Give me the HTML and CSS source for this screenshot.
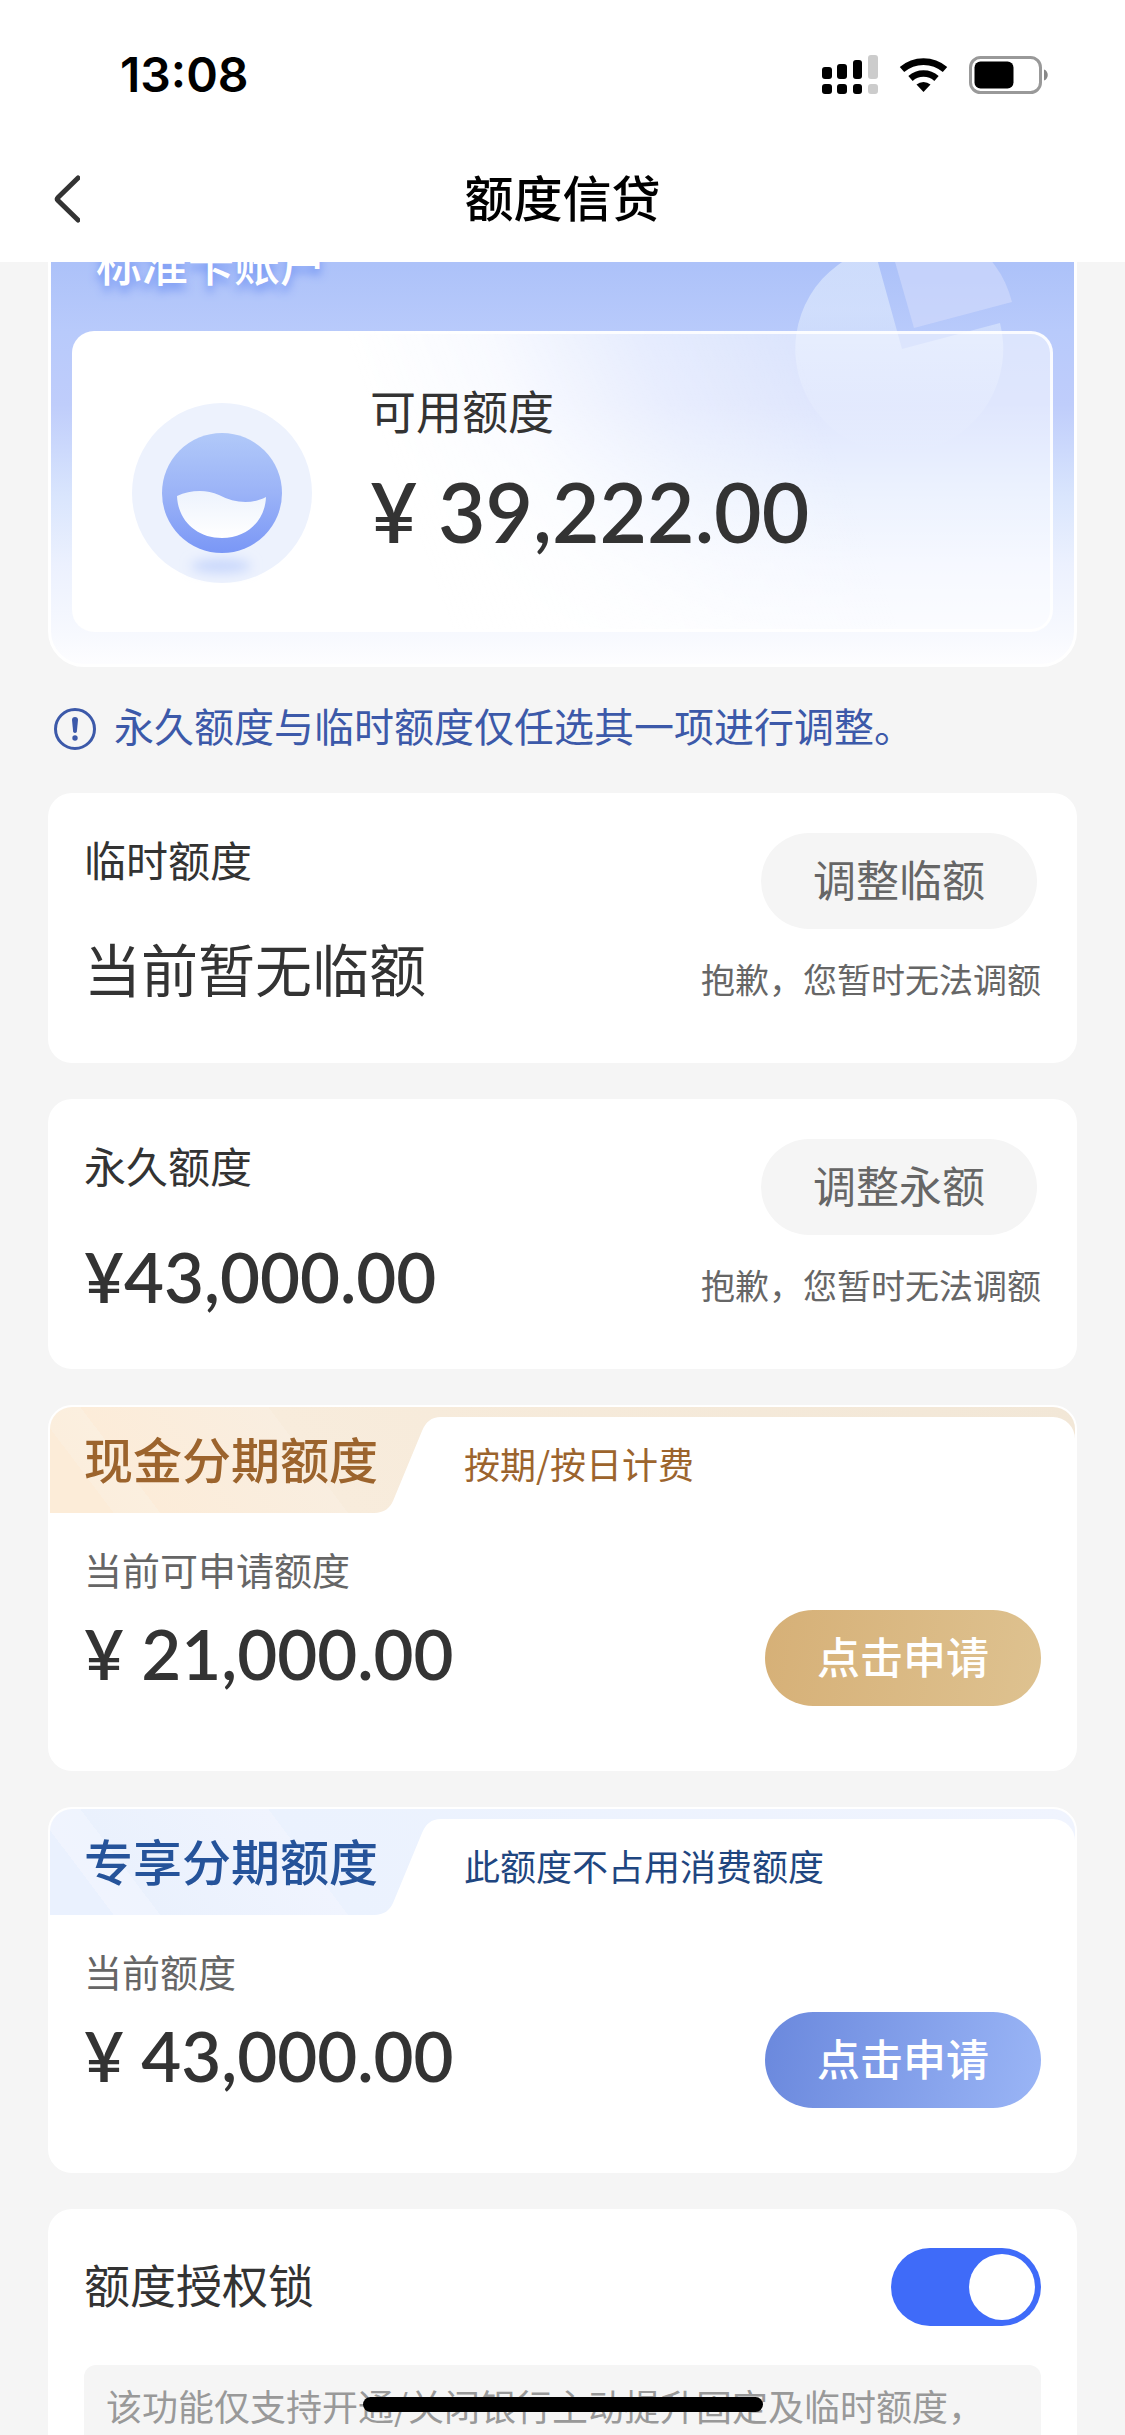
FILE: index.html
```html
<!DOCTYPE html>
<html lang="zh-CN">
<head>
<meta charset="utf-8">
<meta name="viewport" content="width=device-width, initial-scale=1">
<title>额度信贷</title>
<link rel="stylesheet" href="styles.css">
</head>
<body>
<div class="app">
  <header class="top">
    <div class="status">
      <span class="time">13:08</span>
      <svg class="status-icons" width="227" height="40" viewBox="0 0 227 40" aria-hidden="true">
        <rect x="0" y="12" width="10" height="12" rx="3"/>
        <rect x="15" y="9" width="10" height="15" rx="3"/>
        <rect x="31" y="5" width="9" height="19" rx="3"/>
        <rect x="46" y="0" width="10" height="24" rx="3" fill="#ccc"/>
        <rect x="0" y="29" width="10" height="10" rx="3"/>
        <rect x="15" y="29" width="10" height="10" rx="3"/>
        <rect x="31" y="29" width="9" height="10" rx="3"/>
        <rect x="46" y="29" width="10" height="10" rx="3" fill="#ccc"/>
        <path d="M80 14.500A33 33 0 0 1 123 14.500" fill="none" stroke="#000" stroke-width="6.800"/>
        <path d="M88.500 23.500A19.500 19.500 0 0 1 114.500 23.500" fill="none" stroke="#000" stroke-width="6.500"/>
        <path d="M94.500 29.500A11 11 0 0 1 108.500 29.500L101.500 37Z"/>
        <rect x="148.500" y="2.500" width="70" height="35" rx="10" fill="none" stroke="#999" stroke-width="3"/>
        <rect x="152.500" y="6.500" width="39" height="27" rx="6"/>
        <path d="M222 14.500C227 16 227 24 222 25.500Z" fill="#888"/>
      </svg>
    </div>
    <nav class="nav">
      <button class="back" type="button" aria-label="返回">
        <svg width="28" height="48" viewBox="0 0 28 48" aria-hidden="true"><path d="M26 3L6 22.500Q4.500 24 6 25.500L26 45" fill="none" stroke="#333" stroke-width="5" stroke-linecap="round"/></svg>
      </button>
      <h1 class="nav-title">额度信贷</h1>
    </nav>
  </header>

  <main class="content">
    <section class="hero">
      <svg class="hero-pie" width="230" height="220" viewBox="0 0 230 220" aria-hidden="true">
        <defs>
          <linearGradient id="pie" x1="0" y1="0" x2="0" y2="1">
            <stop offset="0.300" stop-color="#dfeafd" stop-opacity=".65"/>
            <stop offset="1" stop-color="#dfeafd" stop-opacity="0"/>
          </linearGradient>
        </defs>
        <path d="M108 117L80 16A104 104 0 1 0 206 91Z" fill="url(#pie)"/>
        <path d="M120 96L91 -5A103 103 0 0 1 218 70Z" fill="#d4dcfb" fill-opacity=".6"/>
      </svg>
      <h2 class="hero-title">标准卡账户</h2>
      <div class="hero-panel">
        <svg class="hero-icon" width="180" height="180" viewBox="0 0 180 180" aria-hidden="true">
          <defs>
            <linearGradient id="ball" x1="0" y1="0" x2="0" y2="1">
              <stop offset="0" stop-color="#b1c9f9"/>
              <stop offset="0.500" stop-color="#9bb3f7"/>
              <stop offset="1" stop-color="#7a97f6"/>
            </linearGradient>
            <linearGradient id="wave" x1="0" y1="0" x2="0" y2="1">
              <stop offset="0" stop-color="#edf3fd"/>
              <stop offset="1" stop-color="#fff"/>
            </linearGradient>
            <filter id="soft" x="-50%" y="-100%" width="200%" height="300%"><feGaussianBlur stdDeviation="6"/></filter>
          </defs>
          <circle cx="90" cy="90" r="90" fill="#edf2fd"/>
          <ellipse cx="89" cy="163" rx="30" ry="7" fill="#c8d7fc" filter="url(#soft)"/>
          <circle cx="90" cy="90" r="60" fill="url(#ball)"/>
          <path d="M45 93C58 87 74 86 87 92C102 100 119 102 134 94C133 118 115 135 90 135C65 135 46 118 45 93Z" fill="url(#wave)"/>
        </svg>
        <div class="hero-text">
          <p class="hero-label">可用额度</p>
          <p class="hero-amount">¥ 39,222.00</p>
        </div>
      </div>
    </section>

    <p class="notice">
      <svg class="notice-icon" width="42" height="42" viewBox="0 0 42 42" aria-hidden="true">
        <circle cx="21" cy="21" r="19.500" fill="none" stroke="#3c59a9" stroke-width="3"/>
        <path d="M18 12Q18 9 21 9Q24 9 24 12L22.800 24Q21 26 19.200 24Z" fill="#3c59a9"/>
        <circle cx="21" cy="30" r="2.700" fill="#3c59a9"/>
      </svg>
      <span>永久额度与临时额度仅任选其一项进行调整。</span>
    </p>

    <div class="cards">
      <section class="card limit">
        <div class="limit-info">
          <h2 class="limit-name">临时额度</h2>
          <p class="limit-value">当前暂无临额</p>
        </div>
        <div class="limit-side">
          <button class="pill pill-muted" type="button">调整临额</button>
          <p class="limit-note">抱歉，您暂时无法调额</p>
        </div>
      </section>

      <section class="card limit">
        <div class="limit-info">
          <h2 class="limit-name">永久额度</h2>
          <p class="amount">¥43,000.00</p>
        </div>
        <div class="limit-side">
          <button class="pill pill-muted" type="button">调整永额</button>
          <p class="limit-note">抱歉，您暂时无法调额</p>
        </div>
      </section>

      <section class="card plan plan-gold">
        <div class="plan-head">
          <h2 class="plan-tab">现金分期额度</h2>
          <svg class="plan-edge" width="68" height="96" viewBox="0 0 68 96" aria-hidden="true"><path d="M0 96C10 96 16 91 19 84L48 14C52 5 57 0 67 0H68V96Z" fill="#fff"/></svg>
          <p class="plan-sub">按期/按日计费</p>
        </div>
        <div class="plan-body">
          <p class="plan-label">当前可申请额度</p>
          <div class="plan-row">
            <p class="amount">¥ 21,000.00</p>
            <button class="pill pill-gold" type="button">点击申请</button>
          </div>
        </div>
      </section>

      <section class="card plan plan-blue">
        <div class="plan-head">
          <h2 class="plan-tab">专享分期额度</h2>
          <svg class="plan-edge" width="68" height="96" viewBox="0 0 68 96" aria-hidden="true"><path d="M0 96C10 96 16 91 19 84L48 14C52 5 57 0 67 0H68V96Z" fill="#fff"/></svg>
          <p class="plan-sub">此额度不占用消费额度</p>
        </div>
        <div class="plan-body">
          <p class="plan-label">当前额度</p>
          <div class="plan-row">
            <p class="amount">¥ 43,000.00</p>
            <button class="pill pill-blue" type="button">点击申请</button>
          </div>
        </div>
      </section>

      <section class="card lock">
        <div class="lock-row">
          <label class="lock-name" for="lock">额度授权锁</label>
          <input class="switch" id="lock" type="checkbox" role="switch" checked>
        </div>
        <p class="lock-note">该功能仅支持开通/关闭银行主动提升固定及临时额度，</p>
      </section>
    </div>
  </main>
  <div class="home-bar"></div>
</div>
</body>
</html>
```
FILE: styles.css
```css
* {
  box-sizing: border-box;
}

body {
  margin: 0;
  background: #f5f5f5;
  color: #333;
  font-family: "Noto Sans CJK SC", sans-serif;
}

h1, h2, p {
  margin: 0;
  font-weight: 400;
}

button {
  border: 0;
  padding: 0;
  background: none;
  font-family: inherit;
}

svg {
  display: block;
  flex: none;
}

.app {
  display: flex;
  flex-direction: column;
  height: 100vh;
}

/* Status bar and navigation */
.top {
  flex: none;
  background: #fff;
}

.status {
  display: flex;
  align-items: center;
  justify-content: space-between;
  height: 130px;
  padding: 20px 76px 0 120px;
}

.time {
  color: #000;
  font: 600 48px/60px Inter, sans-serif;
}

.nav {
  display: grid;
  grid-template-columns: 80px 1fr 80px;
  align-items: center;
  height: 132px;
}

.back {
  justify-self: end;
  padding-top: 6px;
}

.nav-title {
  color: #000;
  font-size: 49px;
  font-weight: 500;
  line-height: 72px;
  text-align: center;
}

/* Scrolling content */
.content {
  flex: 1;
  min-height: 0;
  padding: 0 48px;
  overflow-y: auto;
  scrollbar-width: none;
}

/* Account card, scrolled partly under the navigation */
.hero {
  position: relative;
  margin-top: -60px;
  padding: 24px 21px 32px;
  border: 3px solid #fff;
  border-radius: 36px;
  background: linear-gradient(#adc2f9 60px, #b8cafb 126px, #bfcdfb 200px, #d9e5fd 290px, #ecf1fe 360px, #f7f9fe 430px, #fdfdff 100%);
}

.hero-pie {
  position: absolute;
  top: 27px;
  right: 50px;
}

.hero-title {
  margin-bottom: 38px;
  padding-left: 24px;
  color: #fff;
  font-size: 46px;
  font-weight: 500;
  line-height: 64px;
  text-shadow: 0 6px 10px #6c8ff2;
}

.hero-panel {
  position: relative;
  display: flex;
  align-items: flex-start;
  gap: 58px;
  padding: 45px 57px 46px;
  border: 3px solid rgba(255, 255, 255, .85);
  border-radius: 22px;
  background: linear-gradient(70deg, #fff 35%, rgba(255, 255, 255, .9) 48%, rgba(255, 255, 255, .65) 62%, rgba(255, 255, 255, .5) 76%) border-box;
}

.hero-icon {
  margin-top: 24px;
}

.hero-label {
  margin-bottom: 24px;
  font-size: 46px;
  line-height: 60px;
}

.hero-amount {
  font: 600 82px/96px Lato, sans-serif;
}

/* Notice line */
.notice {
  display: flex;
  align-items: center;
  gap: 18px;
  padding: 30px 6px 40px;
  color: #3c59a9;
  font-size: 40px;
  line-height: 56px;
}

.notice-icon {
  margin-top: 8px;
}

/* Cards */
.cards {
  display: flex;
  flex-direction: column;
  gap: 36px;
}

.card {
  border-radius: 24px;
  background: #fff;
}

.amount {
  font: 600 69px/88px Lato, sans-serif;
}

.pill {
  width: 276px;
  height: 96px;
  padding-bottom: 6px;
  border-radius: 48px;
  color: #fff;
  font-size: 43px;
  font-weight: 500;
}

.pill-muted {
  margin-right: 4px;
  background: #f5f5f5;
  color: #666;
  font-weight: 400;
}

.pill-gold {
  background: linear-gradient(100deg, #d6b077, #dec290);
}

.pill-blue {
  background: linear-gradient(100deg, #6a88dd, #9ab5f6);
}

/* Temporary and permanent limits */
.limit {
  display: flex;
  justify-content: space-between;
  min-height: 270px;
  padding: 36px 36px 48px;
}

.limit-name {
  margin-bottom: 38px;
  font-size: 42px;
  line-height: 60px;
}

.limit-value {
  font-size: 57px;
  line-height: 80px;
}

.limit-side {
  display: flex;
  flex-direction: column;
  align-items: flex-end;
  gap: 26px;
  padding-top: 4px;
}

.limit-note {
  color: #666;
  font-size: 34px;
  line-height: 48px;
}

/* Instalment plans */
.plan {
  overflow: hidden;
  border: 2px solid #fff;
}

.plan-head {
  display: flex;
  align-items: flex-end;
  height: 106px;
}

.plan-gold .plan-head {
  background: linear-gradient(53deg, #fcecd8 51px, #fbeedd 51px, #fbefdf 88px, #fcecd9 88px, #f9eee0 238px, #f8ecdc 238px, #f2e7d7);
  color: #9c642d;
}

.plan-blue .plan-head {
  background: linear-gradient(53deg, #eaf1fe 51px, #f0f4fe 51px, #eff4fe 88px, #eaf1fd 88px, #f0f4fe 238px, #ebf2fe 238px, #f0f4fe);
  color: #25539a;
}

.plan-tab {
  align-self: flex-start;
  width: 324px;
  padding-left: 34px;
  font-size: 49px;
  font-weight: 500;
  line-height: 102px;
  white-space: nowrap;
}

.plan-sub {
  flex: 1;
  height: 96px;
  padding-left: 22px;
  border-top-right-radius: 22px;
  background: #fff;
  font-size: 36px;
  line-height: 92px;
}

.plan-blue .plan-sub {
  color: #1f4680;
}

.plan-body {
  padding: 30px 34px 63px;
}

.plan-label {
  margin-bottom: 15px;
  color: #666;
  font-size: 38px;
  line-height: 52px;
}

.plan-row {
  display: flex;
  justify-content: space-between;
}

/* Authorisation lock */
.lock {
  padding: 39px 36px;
}

.lock-row {
  display: flex;
  justify-content: space-between;
  margin-bottom: 39px;
}

.lock-name {
  font-size: 46px;
  line-height: 70px;
}

.switch {
  display: flex;
  justify-content: flex-end;
  width: 150px;
  height: 78px;
  margin: 0;
  padding: 6px;
  border-radius: 39px;
  background: #3f6bf9;
  appearance: none;
}

.switch::before {
  content: "";
  width: 66px;
  height: 66px;
  border-radius: 50%;
  background: #fff;
}

.switch:not(:checked) {
  justify-content: flex-start;
  background: #ccc;
}

.lock-note {
  padding: 12px 0 40px 22px;
  border-radius: 12px;
  background: #f5f5f5;
  color: #999;
  font-size: 36px;
  line-height: 56px;
}

.home-bar {
  position: fixed;
  bottom: 23px;
  left: 50%;
  width: 400px;
  height: 15px;
  margin-left: -200px;
  border-radius: 8px;
  background: #000;
}
```
